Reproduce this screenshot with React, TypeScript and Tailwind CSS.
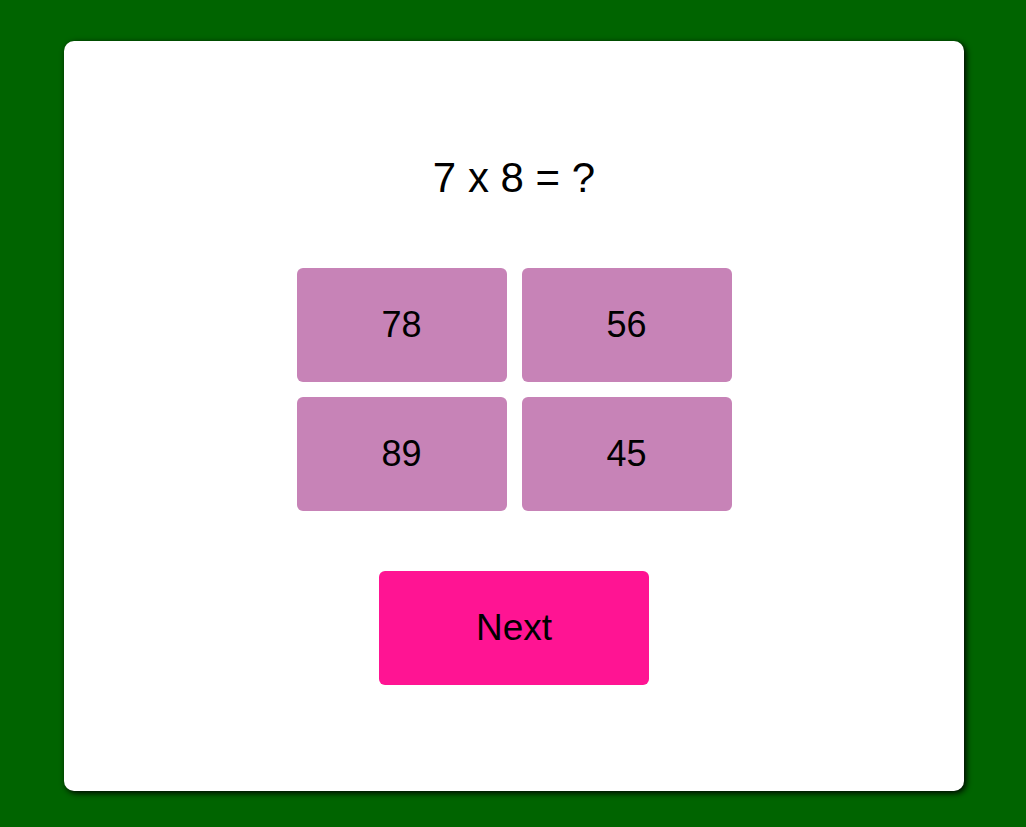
import React from "react";

export default function App() {
  const answers = ["78", "56", "89", "45"];
  return (
    <div className="min-h-[827px] w-full bg-[#006400] pt-[41px] pl-[64px]" style={{ fontFamily: '"Liberation Sans", Arial, sans-serif' }}>
      <div className="flex h-[750px] w-[900px] flex-col items-center rounded-[10px] bg-white shadow-[2px_2px_6px_#000]">
        <h1 className="mt-[113px] text-[42px] leading-[48px] text-black">7 x 8 = ?</h1>
        <div className="mt-[66px] grid grid-cols-[210px_210px] grid-rows-[114px_114px] gap-[15px]">
          {answers.map((a) => (
            <button key={a} className="flex items-center justify-center rounded-[6px] bg-[#c783b7] text-[36px] text-black">
              {a}
            </button>
          ))}
        </div>
        <button className="mt-[60px] flex h-[114px] w-[270px] items-center justify-center rounded-[6px] bg-[#ff1493] text-[37px] text-black">
          Next
        </button>
      </div>
    </div>
  );
}
